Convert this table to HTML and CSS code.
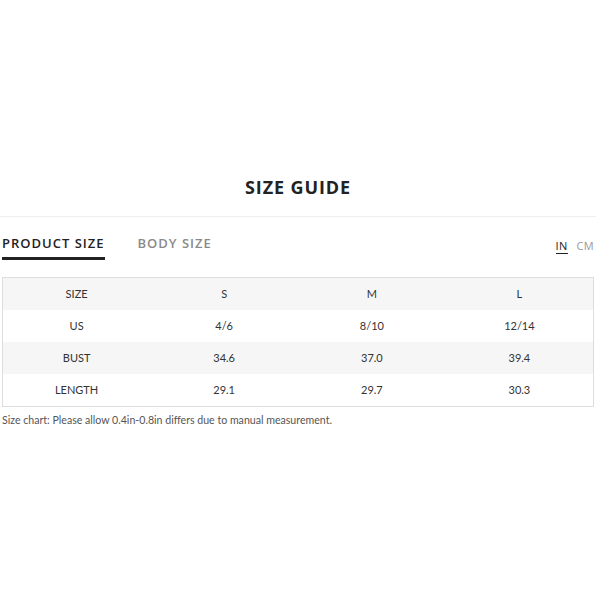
FILE: index.html
```html
<!DOCTYPE html>
<html>
<head>
<meta charset="utf-8">
<link rel="stylesheet" href="styles.css">
</head>
<body>
<div class="page">
  <h1 class="title">SIZE GUIDE</h1>
  <div class="divider"></div>
  <div class="tabs-row">
    <div class="tabs">
      <div class="tab active">PRODUCT SIZE</div>
      <div class="tab">BODY SIZE</div>
    </div>
    <div class="units">
      <span class="unit active">IN</span>
      <span class="unit">CM</span>
    </div>
  </div>
  <table class="chart">
    <tr class="head"><td>SIZE</td><td>S</td><td>M</td><td>L</td></tr>
    <tr><td>US</td><td>4/6</td><td>8/10</td><td>12/14</td></tr>
    <tr class="alt"><td>BUST</td><td>34.6</td><td>37.0</td><td>39.4</td></tr>
    <tr><td>LENGTH</td><td>29.1</td><td>29.7</td><td>30.3</td></tr>
  </table>
  <p class="note">Size chart: Please allow 0.4in-0.8in differs due to manual measurement.</p>
</div>
</body>
</html>
```
FILE: styles.css
```css
html, body {
  margin: 0;
  padding: 0;
  background: #fff;
}
.page {
  width: 596px;
  padding-top: 173px;
  font-family: "Lato", "Open Sans", sans-serif;
  color: #222;
}
.title {
  margin: 0;
  text-align: center;
  font-family: "Open Sans", sans-serif;
  font-weight: 700;
  font-size: 18px;
  line-height: 28px;
  letter-spacing: 0.9px;
  color: #222;
}
.divider {
  height: 1px;
  background: #eeeeee;
  margin-top: 15px;
}
.tabs-row {
  display: flex;
  justify-content: space-between;
  align-items: flex-start;
  padding: 0 2px;
  margin-top: 17px;
}
.tabs {
  display: flex;
  gap: 33px;
}
.tab {
  font-family: "Open Sans", sans-serif;
  font-weight: 600;
  font-size: 13px;
  line-height: 18px;
  letter-spacing: 1px;
  color: #8a8a8a;
  padding-bottom: 5px;
  border-bottom: 3px solid transparent;
}
.tab.active {
  color: #222;
  border-bottom-color: #222;
}
.units {
  display: flex;
  gap: 9px;
  margin-top: 5px;
  margin-right: 0;
}
.unit {
  font-family: "Open Sans", sans-serif;
  font-size: 11px;
  line-height: 14px;
  color: #999;
  letter-spacing: 0.3px;
}
.unit.active {
  color: #222;
  border-bottom: 1px solid #222;
}
.chart {
  margin: 17px 0 0 2px;
  width: 592px;
  border-collapse: collapse;
  border: 1px solid #dddddd;
  table-layout: fixed;
}
.chart td {
  height: 30px;
  padding: 0 0 2px;
  text-align: center;
  font-size: 11px;
  color: #333;
}
.chart tr.head, .chart tr.alt {
  background: #f6f6f6;
}
.note {
  margin: 6px 0 0 2px;
  font-size: 10.6px;
  line-height: 14px;
  color: #555;
}
```
